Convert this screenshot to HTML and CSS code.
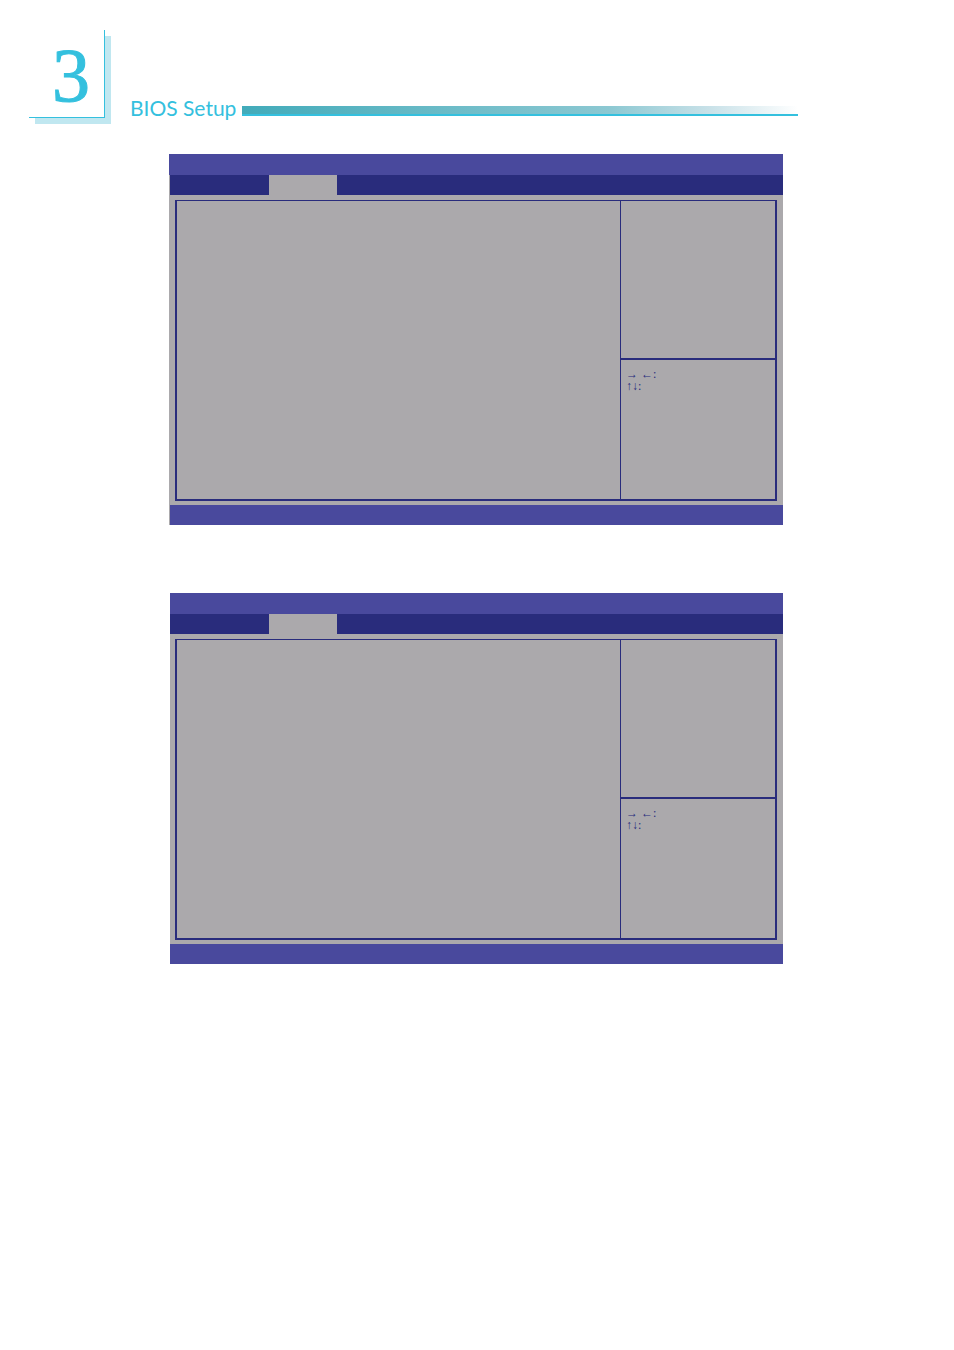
FILE: index.html
```html
<!DOCTYPE html>
<html lang="en">
<head>
    <meta charset="UTF-8">
    <meta name="viewport" content="width=device-width, initial-scale=1.0">
    <title>BIOS Setup</title>
    <link rel="stylesheet" href="styles.css">
</head>
<body>
<header class="page-header">
    <div class="chapter">3</div>
    <h1>BIOS Setup</h1>
    <div class="rule"></div>
</header>

<main>
    <section class="screen screen-first">
        <div class="title-bar"></div>
        <div class="tabs">
            <div class="tab-active"></div>
        </div>
        <div class="screen-body">
            <div class="frame">
                <div class="settings"></div>
                <aside class="side">
                    <div class="help"></div>
                    <div class="keys">
                        <div>→ ←:</div>
                        <div>↑↓:</div>
                    </div>
                </aside>
            </div>
        </div>
        <div class="bottom-bar"></div>
    </section>

    <section class="screen">
        <div class="title-bar"></div>
        <div class="tabs">
            <div class="tab-active"></div>
        </div>
        <div class="screen-body">
            <div class="frame">
                <div class="settings"></div>
                <aside class="side">
                    <div class="help"></div>
                    <div class="keys">
                        <div>→ ←:</div>
                        <div>↑↓:</div>
                    </div>
                </aside>
            </div>
        </div>
        <div class="bottom-bar"></div>
    </section>
</main>
</body>
</html>
```
FILE: styles.css
```css
body {
    margin: 0;
    background-color: #fff;
    font-family: "Liberation Serif", serif;
}
/* Chapter number, title and gradient rule */
.page-header {
    display: flex;
    align-items: flex-end;
    padding: 30px 156px 0 29px;
}
.chapter {
    box-sizing: border-box;
    width: 76px;
    height: 88px;
    padding-left: 9px;
    border-right: 1px solid #34c0de;
    border-bottom: 1px solid #34c0de;
    background-color: #fff;
    box-shadow: 6px 6px 0 #c0e7f0;
    color: #34c0de;
    font-size: 76px;
    line-height: 90px;
    text-align: center;
    -webkit-text-stroke: 1px #34c0de; /* Slightly heavier numeral */
}
h1 {
    margin: 0 6px 0 25px;
    color: #34c0de;
    font-family: Lato, sans-serif;
    font-size: 21px;
    font-weight: 400;
    line-height: 20px;
}
.rule {
    flex: 1;
    height: 8px;
    margin-bottom: 2px;
    border-bottom: 2px solid #34c0de;
    background: linear-gradient(to right, #42abba, #8cc8d2 66%, #c8e1e8 84%, #fff);
}
main {
    padding: 36px 171px 0 170px;
}
.screen {
    margin-bottom: 68px;
    background-color: #aba9ac;
}
.screen-first {
    margin-left: -1px;
    padding-left: 1px;
}
.title-bar {
    height: 21px;
    background-color: #49499d;
}
.screen-first .title-bar {
    margin-left: -1px;
}
.tabs {
    height: 20px;
    padding-left: 99px;
    background-color: #292c7c;
}
.tab-active {
    width: 68px;
    height: 100%;
    background-color: #aba9ac;
}
.screen-body {
    padding: 5px 6px 4px 5px;
}
.frame {
    display: flex;
    border: 2px solid #292c7c;
    border-top-width: 1px;
}
.settings {
    flex: 1;
}
.side {
    width: 154px;
    border-left: 1px solid #292c7c;
}
.help {
    height: 157px;
    border-bottom: 2px solid #292c7c;
}
/* Navigation key legend */
.keys {
    box-sizing: border-box;
    height: 139px;
    padding: 8px 5px;
    color: #292c7c;
    font-size: 12px;
    line-height: 12px;
}
.bottom-bar {
    height: 20px;
    background-color: #49499d;
}
```
